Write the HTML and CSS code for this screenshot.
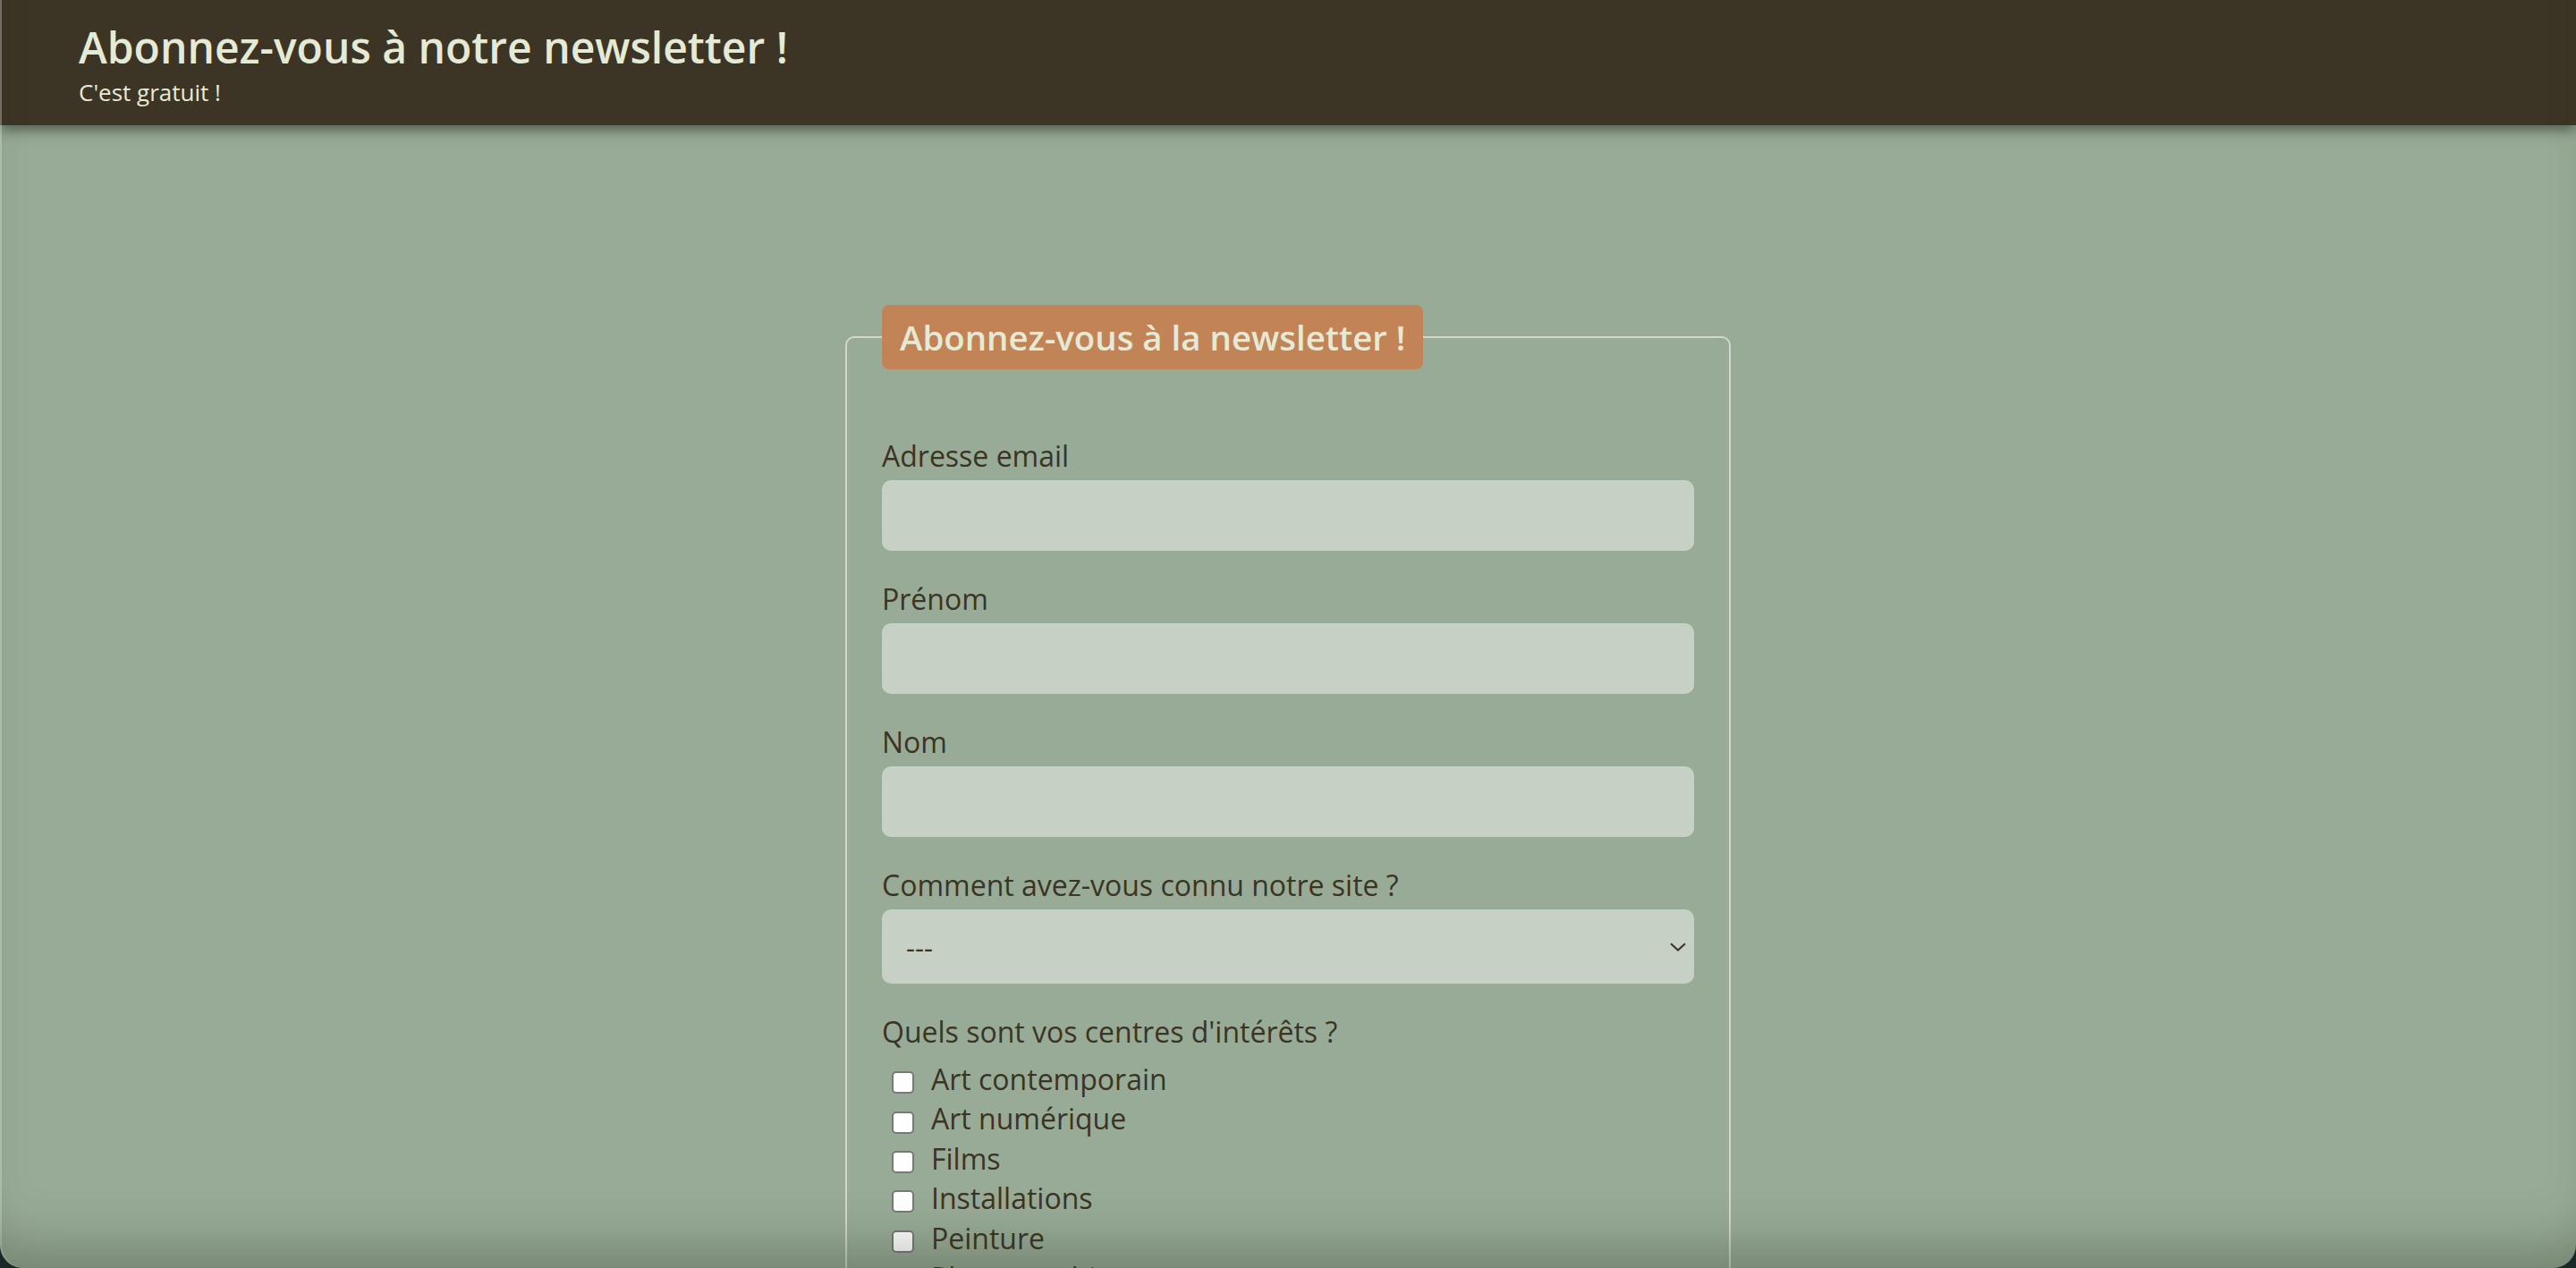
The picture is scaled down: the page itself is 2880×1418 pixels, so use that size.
FILE: index.html
```html
<!DOCTYPE html>
<html lang="fr">
<head>
<meta charset="utf-8">
<title>Newsletter</title>
<link rel="stylesheet" href="styles.css">
</head>
<body>
<header class="site-header">
  <h1 class="site-title">Abonnez-vous à notre newsletter !</h1>
  <p class="site-tagline">C'est gratuit !</p>
</header>
<main class="page">
  <form class="signup">
    <fieldset class="signup-box">
      <legend class="signup-legend">Abonnez-vous à la newsletter !</legend>
      <div class="fields">
        <div class="field">
          <label class="field-label" for="email">Adresse email</label>
          <input class="field-input" id="email" type="email">
        </div>
        <div class="field">
          <label class="field-label" for="prenom">Prénom</label>
          <input class="field-input" id="prenom" type="text">
        </div>
        <div class="field">
          <label class="field-label" for="nom">Nom</label>
          <input class="field-input" id="nom" type="text">
        </div>
        <div class="field">
          <label class="field-label" for="source">Comment avez-vous connu notre site ?</label>
          <div class="select-wrap">
            <select class="field-input field-select" id="source">
              <option>---</option>
            </select>
            <svg class="select-arrow" width="18" height="10" viewBox="0 0 18 10"><path d="M1 1.2 L9 8.6 L17 1.2" fill="none" stroke="#3b3424" stroke-width="2"/></svg>
          </div>
        </div>
        <div class="field">
          <p class="field-label">Quels sont vos centres d'intérêts ?</p>
          <ul class="choices">
            <li><label class="choice"><input class="choice-box" type="checkbox">Art contemporain</label></li>
            <li><label class="choice"><input class="choice-box" type="checkbox">Art numérique</label></li>
            <li><label class="choice"><input class="choice-box" type="checkbox">Films</label></li>
            <li><label class="choice"><input class="choice-box" type="checkbox">Installations</label></li>
            <li><label class="choice"><input class="choice-box" type="checkbox">Peinture</label></li>
            <li><label class="choice"><input class="choice-box" type="checkbox">Photographie</label></li>
            <li><label class="choice"><input class="choice-box" type="checkbox">Sculpture</label></li>
          </ul>
        </div>
      </div>
    </fieldset>
  </form>
</main>
<div class="window-edge"></div>
</body>
</html>
```
FILE: styles.css
```css
html, body {
  margin: 0;
  padding: 0;
}
body {
  background: #98ab96;
  font-family: "Open Sans", "Noto Sans", sans-serif;
  color: #3b3424;
}
.site-header {
  position: relative;
  z-index: 2;
  background: #3c3424;
  padding: 20px 88px 19px;
  box-shadow: 0 5px 14px rgba(20, 25, 15, 0.55);
}
.site-title {
  margin: 0;
  font-size: 48px;
  font-weight: 600;
  line-height: normal;
  color: #e5ead7;
}
.site-tagline {
  margin: 0;
  font-size: 26px;
  line-height: normal;
  color: #e5ead7;
}
.page {
  padding-top: 201px;
}
.signup {
  margin: 0;
}
.signup-box {
  box-sizing: border-box;
  width: 990px;
  margin: 0 auto;
  border: 2px solid #d2d7cf;
  border-radius: 10px;
  padding: 0 39px 40px;
  min-width: 0;
}
.signup-legend {
  background: #c28456;
  color: #e5ead7;
  font-size: 38.4px;
  font-weight: 600;
  line-height: normal;
  padding: 10px 20px;
  border-radius: 8px;
}
.fields {
  display: flex;
  flex-direction: column;
  gap: 32px;
  padding-top: 75px;
}
.field {
  display: flex;
  flex-direction: column;
}
.field-label {
  display: block;
  margin: 0 0 6px;
  font-size: 32px;
  line-height: normal;
  color: #3b3424;
}
.field-input {
  box-sizing: border-box;
  width: 100%;
  height: 79px;
  border: none;
  border-radius: 10px;
  background: #c6d0c5;
  font-family: inherit;
  font-size: 32px;
  color: #3b3424;
  padding: 0 24px;
  margin: 0;
}
.select-wrap {
  position: relative;
}
.field-select {
  -webkit-appearance: none;
  appearance: none;
  height: 83px;
  padding-left: 27px;
  font-size: 31px;
}
.select-arrow {
  position: absolute;
  right: 9px;
  top: 37px;
}
.choices {
  list-style: none;
  margin: 4px 0 0;
  padding: 0;
}
.choice {
  display: flex;
  align-items: center;
  font-size: 32px;
  line-height: 44.4px;
  color: #3b3424;
}
.choice-box {
  -webkit-appearance: none;
  appearance: none;
  box-sizing: border-box;
  width: 25px;
  height: 25px;
  margin: 7px 19px 0 11px;
  border: 2px solid #787878;
  border-radius: 5px;
  background: #ffffff;
  flex: none;
}
.window-edge {
  position: fixed;
  top: 0;
  left: 0;
  right: 0;
  bottom: 0;
  z-index: 5;
  pointer-events: none;
  border-radius: 0 0 26px 26px;
  box-shadow: 0 0 0 40px #1c2828, inset 0 -55px 60px -35px rgba(40, 55, 35, 0.35), inset 2px 0 0 rgba(230, 235, 225, 0.35);
}
```
